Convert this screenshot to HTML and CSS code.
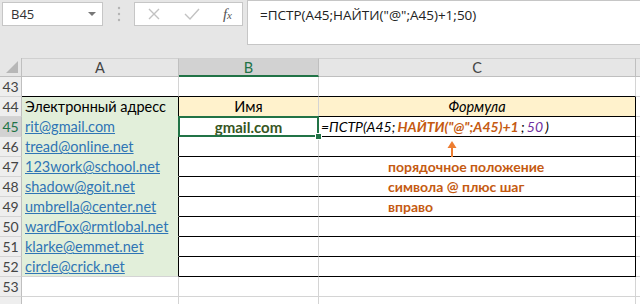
FILE: index.html
```html
<!DOCTYPE html>
<html lang="ru">
<head>
    <meta charset="UTF-8">
    <title>ПСТР и НАЙТИ</title>
    <link rel="stylesheet" href="styles.css">
</head>
<body>
    <!-- Строка формул -->
    <div class="toolbar">
        <div class="namebox">
            <span>B45</span>
            <span class="caret"></span>
        </div>
        <div class="grip">
            <svg width="4" height="16" viewBox="0 0 4 16"><circle cx="2" cy="2" r="1.2"/><circle cx="2" cy="8" r="1.2"/><circle cx="2" cy="14" r="1.2"/></svg>
        </div>
        <div class="fnbox">
            <svg class="btn" width="16" height="16" viewBox="0 0 16 16"><path d="M3 3 L13 13 M13 3 L3 13"/></svg>
            <svg class="btn" width="18" height="16" viewBox="0 0 18 16"><path d="M2 8 L7 13 L16 3"/></svg>
            <span class="fx">f<i>x</i></span>
        </div>
        <div class="formula">=ПСТР(A45;НАЙТИ("@";A45)+1;50)</div>
    </div>

    <!-- Лист -->
    <div class="sheet">
        <div class="corner"><span class="tri"></span></div>
        <div class="colhead">A</div>
        <div class="colhead sel">B</div>
        <div class="colhead">C</div>
        <div class="colhead end"></div>

        <div class="rh">43</div>
        <div class="cell top"></div>
        <div class="cell top"></div>
        <div class="cell top"></div>
        <div class="cell"></div>

        <div class="rh">44</div>
        <div class="cell a">Электронный адресс</div>
        <div class="cell b head">Имя</div>
        <div class="cell c head"><i>Формула</i></div>
        <div class="cell"></div>

        <div class="rh sel">45</div>
        <div class="cell a"><span class="link">rit@gmail.com</span></div>
        <div class="cell b active">gmail.com</div>
        <div class="cell c formula-text"><span>=ПСТР(A45; <b class="orange">НАЙТИ("@";A45)+1</b> ; <span class="purple">50</span> )</span></div>
        <div class="cell"></div>

        <div class="rh">46</div>
        <div class="cell a"><span class="link">tread@online.net</span></div>
        <div class="cell b"></div>
        <div class="cell c arrow-cell">
            <svg width="10" height="17" viewBox="0 0 10 17"><path class="shaft" d="M5 16 L5 5"/><path class="head" d="M5 0 L9.5 7 L0.5 7 Z"/></svg>
        </div>
        <div class="cell"></div>

        <div class="rh">47</div>
        <div class="cell a"><span class="link">123work@school.net</span></div>
        <div class="cell b"></div>
        <div class="cell c note">порядочное положение</div>
        <div class="cell"></div>

        <div class="rh">48</div>
        <div class="cell a"><span class="link">shadow@goit.net</span></div>
        <div class="cell b"></div>
        <div class="cell c note">символа @ плюс шаг</div>
        <div class="cell"></div>

        <div class="rh">49</div>
        <div class="cell a"><span class="link">umbrella@center.net</span></div>
        <div class="cell b"></div>
        <div class="cell c note">вправо</div>
        <div class="cell"></div>

        <div class="rh">50</div>
        <div class="cell a"><span class="link">wardFox@rmtlobal.net</span></div>
        <div class="cell b"></div>
        <div class="cell c"></div>
        <div class="cell"></div>

        <div class="rh">51</div>
        <div class="cell a"><span class="link">klarke@emmet.net</span></div>
        <div class="cell b"></div>
        <div class="cell c"></div>
        <div class="cell"></div>

        <div class="rh">52</div>
        <div class="cell a last"><span class="link">circle@crick.net</span></div>
        <div class="cell b"></div>
        <div class="cell c"></div>
        <div class="cell"></div>

        <div class="rh">53</div>
        <div class="cell"></div>
        <div class="cell"></div>
        <div class="cell"></div>
        <div class="cell"></div>

        <div class="rh"></div>
        <div class="cell"></div>
        <div class="cell"></div>
        <div class="cell"></div>
        <div class="cell"></div>
    </div>
</body>
</html>
```

FILE: styles.css
```css
body {
    margin: 0;
    width: 640px;
    height: 304px;
    overflow: hidden;
    background: #fff;
    font-family: Lato, "Noto Sans", sans-serif;
    color: #000;
}
.toolbar {
    display: flex;
    align-items: flex-start;
    height: 58px;
    padding: 2px 0 0 2px;
    box-sizing: border-box;
    background: #e6e6e6;
}
.namebox {
    display: flex;
    align-items: center;
    justify-content: space-between;
    width: 101px;
    height: 24px;
    padding: 0 6px 0 8px;
    box-sizing: border-box;
    background: #fff;
    border: 1px solid #c6c6c6;
    font-family: "Open Sans", sans-serif;
    font-size: 13px;
    color: #333;
}
.caret {
    width: 0;
    height: 0;
    border-left: 4px solid transparent;
    border-right: 4px solid transparent;
    border-top: 4px solid #777;
}
.grip {
    display: flex;
    justify-content: center;
    align-items: center;
    width: 31px;
    height: 24px;
}
.grip svg {
    fill: #b4b4b4;
}
.fnbox {
    display: flex;
    align-items: center;
    justify-content: space-between;
    width: 109px;
    height: 24px;
    padding: 0 10px 0 11px;
    box-sizing: border-box;
    background: #fff;
    border: 1px solid #c6c6c6;
}
.btn path {
    fill: none;
    stroke: #c2c2c2;
    stroke-width: 1.4;
}
.fx {
    font-family: "Liberation Serif", serif;
    font-style: italic;
    font-size: 15px;
    color: #555;
}
.fx i {
    font-size: 11px;
}
.formula {
    flex: 1;
    height: 45px;
    margin-left: 4px;
    margin-top: -2px;
    padding: 5px 0 0 12px;
    box-sizing: border-box;
    background: #fff;
    border: 1px solid #c6c6c6;
    border-right: none;
    font-family: "Open Sans", sans-serif;
    font-size: 13.5px;
    color: #222;
}

.sheet {
    display: grid;
    grid-template-columns: 22px 157px 140px 317px 1fr;
    grid-template-rows: 19px repeat(12, 20px);
    font-size: 14.5px;
}
.corner {
    position: relative;
    background: #e6e6e6;
    border-right: 1px solid #bfbfbf;
    border-bottom: 1px solid #bfbfbf;
}
.tri {
    position: absolute;
    right: 3px;
    bottom: 3px;
    width: 0;
    height: 0;
    border-left: 12px solid transparent;
    border-bottom: 12px solid #b7b7b7;
}
.colhead {
    display: flex;
    justify-content: center;
    align-items: center;
    background: #e6e6e6;
    border-top: 1px solid #d0d0d0;
    border-right: 1px solid #bfbfbf;
    border-bottom: 1px solid #bfbfbf;
    color: #444;
}
.colhead.sel {
    background: #d2d2d2;
    color: #217346;
    border-bottom: 2px solid #217346;
}
.colhead.end {
    border-right: none;
}
.rh {
    display: flex;
    justify-content: center;
    align-items: center;
    background: #eeeeee;
    border-right: 1px solid #bfbfbf;
    border-bottom: 1px solid #d4d4d4;
    color: #444;
    font-size: 14px;
}
.rh.sel {
    background: #d2d2d2;
    color: #217346;
}
.cell {
    position: relative;
    display: flex;
    align-items: center;
    padding: 0 2px;
    white-space: nowrap;
    border-right: 1px solid #d4d4d4;
    border-bottom: 1px solid #d4d4d4;
}
.cell.top {
    border-bottom-color: #000;
}
.cell.a {
    background: #e2efda;
    border-right-color: #000;
    border-bottom-color: #e2efda;
    padding-left: 3px;
}
.cell.a.last {
    border-bottom-color: #d4d4d4;
}
.cell.b, .cell.c {
    border-bottom-color: #000;
}
.cell.c {
    border-right-color: #000;
}
.head {
    justify-content: center;
    background: #fff2cc;
}
.link {
    color: #2f75b5;
    text-decoration: underline;
}
.active {
    justify-content: center;
    font-weight: bold;
    color: #375623;
    font-size: 15px;
}
.active::after {
    content: "";
    position: absolute;
    left: -1px;
    top: -1px;
    right: -1px;
    bottom: -1px;
    border: 2px solid #217346;
}
.active::before {
    content: "";
    position: absolute;
    right: -4px;
    bottom: -4px;
    width: 5px;
    height: 5px;
    background: #217346;
    border: 1px solid #fff;
    z-index: 1;
}
.formula-text {
    font-style: italic;
    font-size: 14px;
    white-space: pre;
    word-spacing: -1px;
}
.orange {
    color: #c55a11;
}
.purple {
    color: #7030a0;
}
.arrow-cell {
    padding-left: 128px;
    align-items: flex-start;
    padding-top: 4px;
    box-sizing: border-box;
}
.arrow-cell svg {
    overflow: visible;
}
.arrow-cell .shaft {
    stroke: #ed7d31;
    stroke-width: 2;
}
.arrow-cell .head {
    fill: #ed7d31;
}
.note {
    padding-left: 69px;
    font-weight: bold;
    font-size: 14px;
    color: #c55a11;
}
```
